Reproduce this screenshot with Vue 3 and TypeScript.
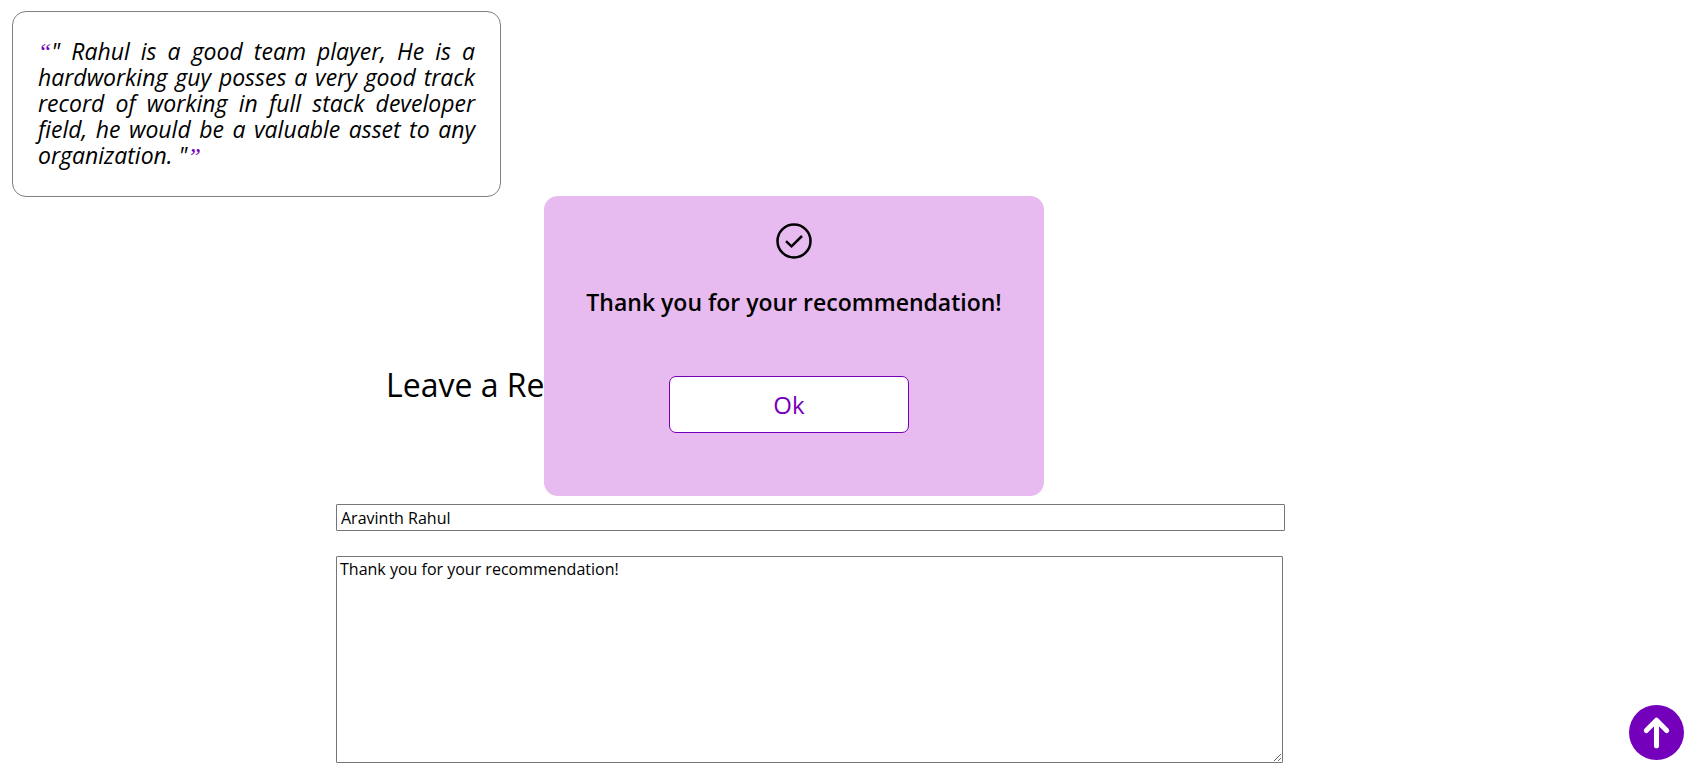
<script setup lang="ts">
import { ref } from 'vue'

const quote = 'Rahul is a good team player, He is a hardworking guy posses a very good track record of working in full stack developer field, he would be a valuable asset to any organization.'
const name = ref('Aravinth Rahul')
const message = ref('Thank you for your recommendation!')
const popupOpen = ref(true)
</script>

<template>
  <main class="page">
    <blockquote class="card"><span class="mark">“</span>" {{ quote }} "<span class="mark">”</span></blockquote>

    <form class="form" @submit.prevent="popupOpen = true">
      <h1 class="title">Leave a Recommendation</h1>
      <input v-model="name" class="name" type="text" aria-label="Name">
      <textarea v-model="message" class="message" aria-label="Message"></textarea>
    </form>

    <div v-if="popupOpen" class="popup" role="dialog" aria-labelledby="popup-text">
      <svg class="check" viewBox="0 0 36 36" aria-hidden="true">
        <circle cx="18" cy="18" r="16.5" />
        <path d="M10 18.2 15.5 23.3 26 13" />
      </svg>
      <p id="popup-text" class="thanks">Thank you for your recommendation!</p>
      <button class="ok" type="button" @click="popupOpen = false">Ok</button>
    </div>

    <a class="top" href="#" aria-label="Back to top">
      <svg viewBox="0 0 54 54" aria-hidden="true">
        <path d="M27 40V15M17 25 27 15 37 25" />
      </svg>
    </a>
  </main>
</template>

<style>
body {
  margin: 0;
  background: #fff;
}
</style>

<style scoped>
.page {
  display: flow-root;
  color: #000;
  font-family: "Trebuchet MS", "Open Sans", sans-serif;
}

.card {
  box-sizing: border-box;
  width: 489px;
  margin: 11px 12px 0;
  padding: 26px 25px 28px;
  border: 1px solid #808080;
  border-radius: 14px;
  font-size: 23px;
  font-style: italic;
  line-height: 26px;
  text-align: justify;
}

.mark {
  color: #7500bb;
  font-family: "Liberation Serif", serif;
  font-size: 24px;
  line-height: 16px;
}

.form {
  display: flex;
  flex-direction: column;
  padding: 0 24% 0 336px;
}

.title {
  margin: 168px 0 99px 50px;
  font-size: 32px;
  font-weight: 400;
  line-height: 40px;
}

.name,
.message {
  box-sizing: border-box;
  margin: 0;
  border: 1px solid #767676;
  border-radius: 1px;
  background: #fff;
  color: #000;
  font: 16px/20px "Trebuchet MS", "Open Sans", sans-serif;
  outline: none;
}

.name {
  width: calc(100% - 1px);
  height: 27px;
  padding: 1px 4px;
}

.message {
  width: calc(100% - 3px);
  height: 207px;
  margin-top: 25px;
  padding: 2px 3px;
  resize: both;
}

.popup {
  position: fixed;
  top: 196px;
  left: 544px;
  box-sizing: border-box;
  display: flex;
  flex-direction: column;
  align-items: center;
  width: 500px;
  padding: 27px 20px 63px;
  border-radius: 14px;
  background: #e7bbef;
}

.check {
  width: 36px;
  height: 36px;
  fill: none;
  stroke: #000;
  stroke-width: 2.5;
}

.thanks {
  margin: 27px 0 58px;
  font-size: 23px;
  font-weight: 600;
  line-height: 32px;
  white-space: nowrap;
}

.ok {
  width: 240px;
  height: 57px;
  margin-right: 10px;
  padding: 0;
  border: 1px solid #7500bb;
  border-radius: 7px;
  background: #fff;
  color: #7500bb;
  font: 24px/32px "Trebuchet MS", "Open Sans", sans-serif;
}

.top {
  position: fixed;
  right: 8px;
  bottom: 18px;
  width: 55px;
  height: 55px;
  border-radius: 50%;
  background: #7500bb;
}

.top svg {
  display: block;
  fill: none;
  stroke: #fff;
  stroke-width: 5;
  stroke-linecap: round;
  stroke-linejoin: round;
}
</style>
